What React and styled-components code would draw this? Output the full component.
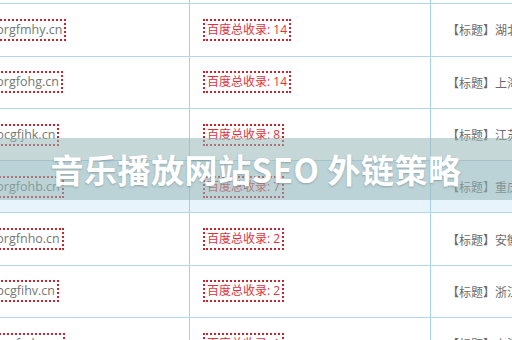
import React from 'react'
import styled, { createGlobalStyle } from 'styled-components'

const GlobalStyle = createGlobalStyle`
  html, body {
    margin: 0;
    padding: 0;
    background: #ffffff;
    overflow: hidden;
  }
`

const Page = styled.div`
  position: relative;
  width: 512px;
  height: 340px;
  overflow: hidden;
  background: #ffffff;
  font-family: "Open Sans", "Noto Sans CJK SC", sans-serif;
`

const Table = styled.div`
  display: flex;
  flex-direction: column;
  margin-top: -48px;
  margin-left: -112px;
  width: 780px;
`

const Row = styled.div`
  display: grid;
  grid-template-columns: 302px 241px 1fr;
  height: 52.3px;
  box-sizing: border-box;
  border-bottom: 1px solid #b3d6ee;
  background: ${props => (props.active ? '#e8f4fc' : '#ffffff')};
`

const Cell = styled.div`
  display: flex;
  align-items: center;
  box-sizing: border-box;
  padding-left: ${props => props.pad}px;
  border-right: ${props => (props.last ? 'none' : '1px solid #a6d0ec')};
  white-space: nowrap;
  overflow: hidden;
`

const Tag = styled.span`
  display: inline-block;
  box-sizing: border-box;
  height: 22px;
  line-height: 18px;
  padding: 0 2px;
  border: 2px dotted #c8242f;
  font-size: ${props => props.size}px;
  color: ${props => props.color};
`

const Title = styled.span`
  font-family: "Noto Sans CJK SC", sans-serif;
  font-size: 12px;
  color: #6a6a6a;
`

const Banner = styled.div`
  position: absolute;
  left: 0;
  right: 0;
  top: 138px;
  height: 62px;
  display: flex;
  align-items: center;
  justify-content: center;
  background: rgba(150, 182, 182, 0.55);
`

const BannerText = styled.h1`
  margin: 0;
  font-family: "Noto Sans CJK SC", sans-serif;
  font-weight: 700;
  font-size: 33px;
  color: #ffffff;
  letter-spacing: 0.5px;
  text-shadow: 0 1px 2px rgba(60, 80, 80, 0.35);
`

const rows = [
  { site: 'www.orgfmhy.cn', count: 14, title: '【标题】湖北武汉音乐播放网站' },
  { site: 'www.orgfohg.cn', count: 14, title: '【标题】上海音乐播放网站' },
  { site: 'www.bcgfjhk.cn', count: 8, title: '【标题】江苏南京音乐播放网站' },
  { site: 'www.orgfohb.cn', count: 7, title: '【标题】重庆音乐播放网站', active: true },
  { site: 'www.orgfnho.cn', count: 2, title: '【标题】安徽合肥音乐播放网站' },
  { site: 'www.bcgfihv.cn', count: 2, title: '【标题】浙江杭州音乐播放网站' },
  { site: 'www.orgfmkz.cn', count: 1, title: '【标题】上海音乐播放网站' },
]

export default function App() {
  return (
    <Page>
      <GlobalStyle />
      <Table>
        <Row>
          <Cell pad={72} />
          <Cell pad={13} />
          <Cell pad={16} last />
        </Row>
        {rows.map(r => (
          <Row key={r.site} active={r.active}>
            <Cell pad={72}>
              <Tag size={12.5} color="#737873">{r.site}</Tag>
            </Cell>
            <Cell pad={13}>
              <Tag size={12} color="#e0323c">百度总收录: {r.count}</Tag>
            </Cell>
            <Cell pad={16} last>
              <Title>{r.title}</Title>
            </Cell>
          </Row>
        ))}
      </Table>
      <Banner>
        <BannerText>音乐播放网站SEO 外链策略</BannerText>
      </Banner>
    </Page>
  )
}
